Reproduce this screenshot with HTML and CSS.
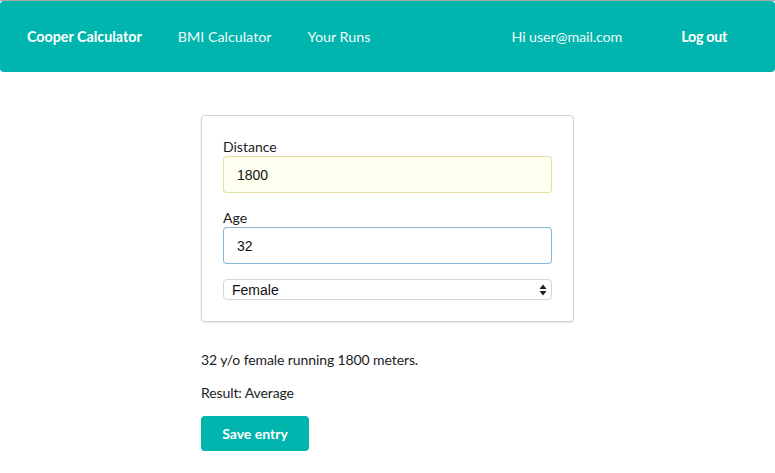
FILE: index.html
```html
<!DOCTYPE html>
<html>
<head>
<meta charset="utf-8">
<link rel="stylesheet" href="styles.css">
</head>
<body>
<div class="topline"></div>
<nav class="menu">
  <a class="item brand">Cooper Calculator</a>
  <a class="item">BMI Calculator</a>
  <a class="item">Your Runs</a>
  <div class="right">
    <span class="item user">Hi user@mail.com</span>
    <a class="item logout">Log out</a>
  </div>
</nav>
<main class="content">
  <form class="card">
    <div class="field">
      <label class="label">Distance</label>
      <input class="input autofill" type="text" value="1800">
    </div>
    <div class="field">
      <label class="label">Age</label>
      <input class="input active" type="text" value="32">
    </div>
    <div class="select-wrap">
      <select class="select">
        <option>Female</option>
        <option>Male</option>
      </select>
      <svg class="arrows" width="8" height="12" viewBox="0 0 8 12"><path d="M4 0.5 L7.5 5 H0.5 Z M0.5 7 H7.5 L4 11.5 Z" fill="#222"/></svg>
    </div>
  </form>
  <p class="msg first">32 y/o female running 1800 meters.</p>
  <p class="msg">Result: Average</p>
  <button class="btn" type="button">Save entry</button>
</main>
</body>
</html>
```
FILE: styles.css
```css
* { box-sizing: border-box; }
html, body {
  margin: 0;
  padding: 0;
  background: #fff;
  font-family: Lato, "Open Sans", sans-serif;
  font-size: 14px;
  color: #1b1c1d;
}
.topline {
  height: 1px;
  background: #a9a9a9;
}
.menu {
  display: flex;
  align-items: center;
  height: 71px;
  background: #00b5ad;
  border-radius: 4px;
  padding: 0 30px 0 9px;
}
.item {
  color: #fff;
  padding: 0 18px;
  font-size: 14.3px;
  line-height: 18px;
  text-decoration: none;
  opacity: 0.95;
}
.brand, .logout {
  font-weight: 700;
  opacity: 1;
}
.right {
  margin-left: auto;
  display: flex;
  align-items: center;
}
.user { margin-right: 23px; letter-spacing: -0.1px; }
.logout { letter-spacing: -0.3px; }
.content {
  width: 373px;
  margin: 43px auto 0;
}
.card {
  border: 1px solid #d4d4d5;
  border-radius: 4px;
  box-shadow: 0 1px 2px rgba(34, 36, 38, 0.12);
  padding: 22px 21px 21px;
}
.field { margin-bottom: 16px; }
.label {
  display: block;
  line-height: 18px;
  font-size: 14px;
  color: #1b1c1d;
}
.input {
  display: block;
  width: 100%;
  height: 37px;
  padding: 0 14px;
  font-family: "Liberation Sans", Arial, sans-serif;
  font-size: 14px;
  color: #111;
  -webkit-appearance: none;
  appearance: none;
  border: none;
  box-shadow: inset 0 0 0 1px #dcdcdc;
  border-radius: 4px;
  outline: none;
  background: #fff;
}
.input.autofill {
  background: #fffff0;
  box-shadow: inset 0 0 0 1px #e5dfa1;
}
.input.active {
  box-shadow: inset 0 0 0 1px #85b7d9;
}
.field + .select-wrap { margin-top: -1px; }
.select-wrap {
  position: relative;
  height: 21px;
}
.select {
  display: block;
  width: 100%;
  height: 21px;
  -webkit-appearance: none;
  appearance: none;
  border: 1px solid #d6d6d6;
  border-radius: 4px;
  background: #fff;
  font-family: "Liberation Sans", Arial, sans-serif;
  font-size: 14px;
  color: #111;
  padding: 0 8px;
  outline: none;
}
.arrows {
  position: absolute;
  right: 5px;
  top: 5px;
}
.msg {
  margin: 0;
  line-height: 20px;
  letter-spacing: -0.1px;
}
.msg.first { margin-top: 28px; margin-bottom: 13px; }
.btn {
  margin-top: 13px;
  width: 108px;
  height: 35px;
  border: none;
  border-radius: 4px;
  background: #00b5ad;
  color: #fff;
  font-family: Lato, sans-serif;
  font-weight: 700;
  font-size: 14px;
  padding: 0;
}
```
